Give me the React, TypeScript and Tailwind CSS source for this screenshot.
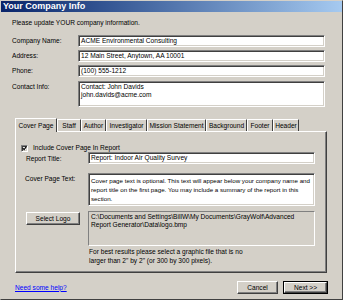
import React from 'react';

const sunken =
  'border border-t-[#808080] border-l-[#808080] border-b-white border-r-white shadow-[inset_1px_1px_0_#404040,inset_-1px_-1px_0_#d4d0c8]';
const raised =
  'border border-t-white border-l-white border-b-[#404040] border-r-[#404040] shadow-[inset_-1px_-1px_0_#808080]';

const Field = ({ label, children, h = 'h-[12px]' }: { label: string; children: React.ReactNode; h?: string }) => (
  <div className="flex items-start">
    <div className="w-[66px] pt-[2px] leading-[8px]">{label}</div>
    <div className={`w-[247px] ${h} bg-white pl-[2px] pt-[1px] leading-[8px] whitespace-nowrap ${sunken}`}>{children}</div>
  </div>
);

// widths measured off the tab strip
const tabs: [string, string][] = [
  ['Cover Page', 'w-[42px]'],
  ['Staff', 'w-[24px]'],
  ['Author', 'w-[25px]'],
  ['Investigator', 'w-[41px]'],
  ['Mission Statement', 'w-[59px]'],
  ['Background', 'w-[41px]'],
  ['Footer', 'w-[26px]'],
  ['Header', 'w-[26px]'],
];

export default function App() {
  return (
    <div
      className="w-[343px] h-[300px] bg-[#d4d0c8] text-black text-[6.6px] flex flex-col border border-t-[#d4d0c8] border-l-[#d4d0c8] border-r-[#404040] border-b-[#404040]"
      style={{ fontFamily: '"Liberation Sans", Arial, sans-serif' }}
    >
      {/* title bar */}
      <div className="h-[11px] bg-gradient-to-r from-[#0a246a] to-[#a6caf0] text-white font-bold text-[9px] leading-[11px] pl-[2px]">
        Your Company Info
      </div>

      <div className="flex-1 flex flex-col pl-[11px] pr-[14px]">
        <div className="mt-[7px] leading-[8px]">Please update YOUR company information.</div>

        <div className="mt-[8px] flex flex-col gap-[3px]">
          <Field label="Company Name:">ACME Environmental Consulting</Field>
          <Field label="Address:">12 Main Street, Anytown, AA 10001</Field>
          <Field label="Phone:">(100) 555-1212</Field>
          <div className="mt-[1px]">
            <Field label="Contact Info:" h="h-[26px]">
              Contact: John Davids
              <br />
              john.davids@acme.com
            </Field>
          </div>
        </div>

        {/* tabs */}
        <div className="mt-[10px] ml-[3px] flex items-end h-[14px]">
          {tabs.map(([t, w], i) => (
            <div
              key={t}
              className={`${w} whitespace-nowrap text-center leading-[8px] border-t border-l border-r border-t-white border-l-white border-r-[#404040] ${
                i === 0 ? 'h-[14px] pt-[3px] relative z-10 bg-[#d4d0c8] -mb-[1px]' : 'h-[12px] pt-[2px]'
              }`}
            >
              {t}
            </div>
          ))}
        </div>

        {/* panel */}
        <div className="ml-[3px] w-[312px] h-[142px] border border-t-white border-l-white border-r-[#404040] border-b-[#404040] shadow-[inset_-1px_-1px_0_#808080] pl-[5px] pr-[11px]">
          <div className="mt-[12px] flex items-center gap-[5px]">
            <div className={`w-[7px] h-[7px] bg-white ${sunken} flex items-center justify-center`}>
              <svg width="5" height="5" viewBox="0 0 7 7">
                <path d="M1 3 L3 5 L6 1" stroke="black" strokeWidth="1.6" fill="none" />
              </svg>
            </div>
            <span className="leading-[8px]">Include Cover Page In Report</span>
          </div>

          <div className="mt-[0px] flex items-start">
            <div className="w-[67px] pl-[5px] pt-[3px] leading-[8px]">Report Title:</div>
            <div className={`w-[227px] h-[12px] bg-white pl-[2px] pt-[1px] leading-[8px] whitespace-nowrap ${sunken}`}>
              Report: Indoor Air Quality Survey
            </div>
          </div>

          <div className="mt-[9px] flex items-start">
            <div className="w-[67px] pl-[4px] pt-[2px] leading-[8px] whitespace-nowrap">Cover Page Text:</div>
            <div className={`w-[227px] h-[33px] bg-white pl-[2px] pt-[2px] text-[6.2px] leading-[9px] whitespace-nowrap ${sunken}`}>
              Cover page text is optional. This text will appear below your company name and
              <br />
              report title on the first page. You may include a summary of the report in this
              <br />
              section.
            </div>
          </div>

          <div className="mt-[5px] flex items-start">
            <div className="w-[67px] pl-[5px] pt-[1px]">
              <div className={`w-[54px] h-[13px] flex items-center justify-center ${raised}`}>Select Logo</div>
            </div>
            <div className="w-[227px] h-[35px] pl-[2px] pt-[1px] leading-[8px] whitespace-nowrap border border-t-[#808080] border-l-[#808080] border-b-white border-r-white">
              C:\Documents and Settings\BillW\My Documents\GrayWolf\Advanced
              <br />
              Report Generator\Data\logo.bmp
            </div>
          </div>

          <div className="mt-[2px] ml-[68px] leading-[8.5px] whitespace-nowrap">
            For best results please select a graphic file that is no
            <br />
            larger than 2" by 2" (or 300 by 300 pixels).
          </div>
        </div>

        {/* footer */}
        <div className="mt-[8px] flex items-center">
          <span className="ml-[3px] text-[#0000ff] underline leading-[8px]">Need some help?</span>
          <div className="ml-auto flex gap-[5px]">
            <div className={`w-[41px] h-[13px] flex items-center justify-center ${raised}`}>Cancel</div>
            <div className="w-[45px] h-[13px] border border-black">
              <div className={`w-full h-full flex items-center justify-center ${raised}`}>Next &gt;&gt;</div>
            </div>
          </div>
        </div>
      </div>
    </div>
  );
}
